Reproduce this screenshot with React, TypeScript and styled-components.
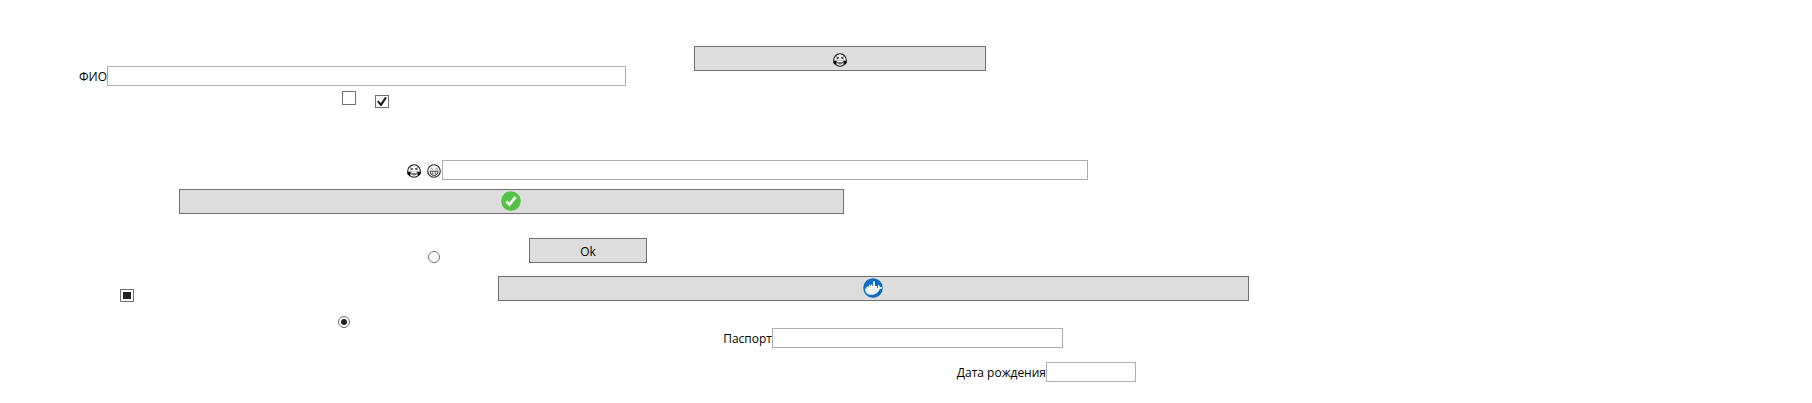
import React, { useEffect, useRef } from "react";
import styled, { createGlobalStyle } from "styled-components";

const GlobalStyle = createGlobalStyle`
  *, *::before, *::after { box-sizing: border-box; }
  body {
    margin: 0;
    background: #fff;
    color: #000;
    font: 12px/16px "Open Sans", "Noto Sans", sans-serif;
  }
`;

const Page = styled.main`
  display: flex;
  flex-direction: column;
  padding: 46px 0 20px;
`;

/* Columns share the window width in proportion to the given weights. */
const Row = styled.div<{ $cols: number[]; $gap?: number; $height?: number }>`
  display: grid;
  grid-template-columns: ${(p) => p.$cols.map((c) => `minmax(0, ${c}fr)`).join(" ")};
  align-items: end;
  min-height: ${(p) => p.$height ?? 0}px;
  margin-top: ${(p) => p.$gap ?? 0}px;
`;

const Label = styled.label`
  grid-column: 1;
  justify-self: end;
  display: flex;
  align-items: center;
  height: 17px;
  padding-bottom: 1px;
  white-space: nowrap;
`;

const IconLabel = styled(Label)`
  gap: 6px;
  padding-right: 1px;
`;

const TextBox = styled.input`
  width: 100%;
  height: 20px;
  padding: 0 2px;
  border: 1px solid #abadb3;
  border-radius: 0;
  background: #fff;
  font: inherit;
  outline: none;
`;

const Button = styled.button<{ $col: number; $image?: boolean }>`
  grid-column: ${(p) => p.$col};
  align-self: start;
  display: flex;
  align-items: center;
  justify-content: center;
  width: 100%;
  height: 25px;
  padding: ${(p) => (p.$image ? "0 1px 1px 0" : "2px 0 0")};
  border: 1px solid #707070;
  border-radius: 0;
  background: #ddd;
  color: #000;
  font: inherit;
`;

const CheckBox = styled.input.attrs({ type: "checkbox" })<{ $col: number; $tall?: boolean }>`
  grid-column: ${(p) => p.$col};
  align-self: ${(p) => (p.$tall ? "start" : "end")};
  appearance: none;
  display: grid;
  place-items: center;
  width: 14px;
  height: ${(p) => (p.$tall ? 14 : 13)}px;
  margin: 0;
  border: 1px solid #707070;
  background: #fff;

  &:checked::before {
    content: "";
    width: 10px;
    height: 9px;
    background: #212121;
    clip-path: polygon(0 52%, 14% 40%, 38% 66%, 80% 0, 100% 8%, 46% 100%, 34% 100%);
  }

  &:indeterminate::before {
    content: "";
    width: 8px;
    height: 7px;
    background: #212121;
  }
`;

const Radio = styled.input.attrs({ type: "radio" })<{ $col: number }>`
  grid-column: ${(p) => p.$col};
  appearance: none;
  display: grid;
  place-items: center;
  width: 12px;
  height: 12px;
  margin: 0;
  border: 1px solid #707070;
  border-radius: 50%;
  background: #fff;

  &:checked::before {
    content: "";
    width: 6px;
    height: 6px;
    border-radius: 50%;
    background: #212121;
  }
`;

const Icon = styled.svg`
  display: block;
  flex: none;
`;

const Joy = () => (
  <Icon width="14" height="14" viewBox="0 0 14 14" role="img" aria-label="😂">
    <circle cx="7" cy="7" r="6.3" fill="#fff" fillOpacity=".55" stroke="#111" strokeWidth="1.1" />
    <path d="M3 3.8 5.8 4.8 3.4 6M11 3.8 8.2 4.800l2.400 1.200" fill="none" stroke="#333" strokeWidth=".9" />
    <path d="M3.400 7.400h7.200c0 2.600-1.400 4-3.600 4s-3.600-1.400-3.600-4Z" fill="#777" />
    <path d="M4.400 7.600h5.200v1.400H4.400Z" fill="#fff" />
    <path d="M.3 8.300 3.300 7.400c.7 2 .4 3.600-.9 4-1.400.1-2.300-1.300-2.100-3.100ZM13.700 8.300l-3-.9c-.7 2-.4 3.600.9 4 1.400.1 2.300-1.300 2.100-3.100Z" fill="#000" />
  </Icon>
);

const Grin = () => (
  <Icon width="14" height="14" viewBox="0 0 14 14" role="img" aria-label="😁">
    <circle cx="7" cy="7" r="6.3" fill="#fff" stroke="#222" strokeWidth="1.1" />
    <path d="M3.300 5.200 4.500 4.200 5.700 5.200M8.300 5.200 9.500 4.200l1.200 1" fill="none" stroke="#444" strokeWidth=".8" />
    <path d="M3 7.200h8c0 2.600-1.600 4.200-4 4.200S3 9.800 3 7.200Z" fill="#fff" stroke="#222" strokeWidth=".9" />
    <path d="M3.200 9.200h7.600M5.500 7.200v4M8.500 7.200v4" stroke="#666" strokeWidth=".6" />
  </Icon>
);

const Done = () => (
  <Icon width="20" height="20" viewBox="0 0 20 20" role="img" aria-label="Готово">
    <circle cx="10" cy="10" r="9.800" fill="#54c045" />
    <path d="m5.500 10.500 3 3 6-7.300" fill="none" stroke="#fff" strokeWidth="2.600" />
  </Icon>
);

const Whale = () => (
  <Icon width="20" height="20" viewBox="0 0 20 20" role="img" aria-label="Docker">
    <circle cx="10" cy="10" r="9.800" fill="#0b6cc4" />
    <path
      d="M2 10.500h1.500V8.500H6V6.500h1V8h.7V6.500h1.600V8h.7V3.500h2V8h.7V8h1.300v2H15c-.4-1.300-.1-2.400.6-3.200.8.700 1.100 1.400 1.200 2.200 1-.1 1.900.1 2.700.6-.5 1.100-1.500 1.700-2.800 1.700-1.600 3.600-4.300 5.500-8.200 5.500-4.200 0-6.500-2-6.500-6.300Z"
      fill="#f4f6f8"
    />
  </Icon>
);

const MixedCheckBox = ({ col }: { col: number }) => {
  const box = useRef<HTMLInputElement>(null);
  useEffect(() => {
    if (box.current) box.current.indeterminate = true;
  }, []);
  return <CheckBox ref={box} $col={col} aria-label="Не определено" />;
};

export default function App() {
  return (
    <>
      <GlobalStyle />
      <Page>
        <Row $cols={[107, 519, 68, 292, 826]} $height={40}>
          <Label htmlFor="name">ФИО</Label>
          <TextBox id="name" type="text" />
          <Button type="button" $col={4}>
            <Joy />
          </Button>
        </Row>
        <Row $cols={[342, 33, 1437]} $gap={5} $height={17}>
          <CheckBox $col={2} $tall aria-label="Не выбрано" />
          <CheckBox $col={3} defaultChecked aria-label="Выбрано" />
        </Row>
        <Row $cols={[442, 646, 724]} $gap={52}>
          <IconLabel htmlFor="mood">
            <Joy />
            <Grin />
          </IconLabel>
          <TextBox id="mood" type="text" />
        </Row>
        <Row $cols={[179, 665, 968]} $gap={9}>
          <Button type="button" $col={2} $image>
            <Done />
          </Button>
        </Row>
        <Row $cols={[428, 101, 118, 1165]} $gap={24}>
          <Radio $col={2} name="first" aria-label="Не выбрано" />
          <Button type="button" $col={3}>Ok</Button>
        </Row>
        <Row $cols={[120, 378, 751, 563]} $gap={13} $height={26}>
          <MixedCheckBox col={2} />
          <Button type="button" $col={3} $image>
            <Whale />
          </Button>
        </Row>
        <Row $cols={[338, 1474]} $gap={14}>
          <Radio $col={2} name="second" defaultChecked aria-label="Выбрано" />
        </Row>
        <Row $cols={[772, 291, 749]}>
          <Label htmlFor="passport">Паспорт</Label>
          <TextBox id="passport" type="text" />
        </Row>
        <Row $cols={[1046, 90, 676]} $gap={14}>
          <Label htmlFor="birth">Дата рождения</Label>
          <TextBox id="birth" type="text" />
        </Row>
      </Page>
    </>
  );
}
